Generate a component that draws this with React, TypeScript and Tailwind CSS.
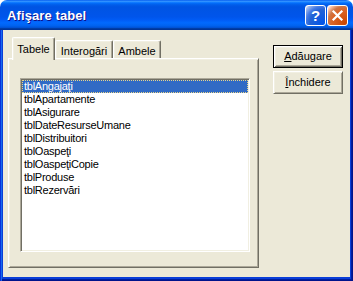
import React from "react";

const items = [
  "tblAngajaţi",
  "tblApartamente",
  "tblAsigurare",
  "tblDateResurseUmane",
  "tblDistribuitori",
  "tblOaspeţi",
  "tblOaspeţiCopie",
  "tblProduse",
  "tblRezervări",
];

export default function App() {
  return (
    <div className="w-[353px] h-[281px] bg-white overflow-hidden font-['Liberation_Sans',Arial,sans-serif] text-[11px] text-black">
      {/* Title bar */}
      <div className="h-[30px] rounded-t-[7px] flex items-center pl-[7px] pr-[5px] bg-[linear-gradient(180deg,#0058ee_0%,#3593ff_4%,#288eff_6%,#127dff_8%,#036ffc_10%,#0262ee_14%,#0057e5_20%,#0054e3_24%,#0055eb_56%,#005bf5_66%,#026afe_76%,#0062ef_86%,#0052d6_92%,#0040ab_94%,#003092_100%)]">
        <span className="text-white font-bold text-[13px] leading-none [text-shadow:1px_1px_#0f1089] tracking-[0.1px]">
          Afişare tabel
        </span>
        <div className="ml-auto flex gap-[1px]">
          <div className="w-[21px] h-[21px] rounded-[3px] border border-white flex items-center justify-center bg-[radial-gradient(circle_at_90%_90%,#0054e9_0%,#2263d5_55%,#4479e4_70%,#a3bbec_90%,#ffffff_100%)]">
            <span className="text-white font-bold text-[15px] leading-none">?</span>
          </div>
          <div className="w-[21px] h-[21px] rounded-[3px] border border-white flex items-center justify-center bg-[radial-gradient(circle_at_90%_90%,#cc4600_0%,#dc6527_55%,#cd7546_70%,#ffccb2_90%,#ffffff_100%)]">
            <svg width="13" height="13" viewBox="0 0 13 13">
              <path d="M2.5 2.5 L10.5 10.5 M10.5 2.5 L2.5 10.5" stroke="white" strokeWidth="2.2" strokeLinecap="square" />
            </svg>
          </div>
        </div>
      </div>

      {/* Frame */}
      <div className="pl-[3px] pr-[3px] pb-[4px] bg-[#0a3ed8] shadow-[inset_1px_0_#0831d9,inset_2px_0_#166aee,inset_-1px_-1px_#00138c,inset_-2px_-2px_#001ea0]">
        <div className="h-[247px] bg-[#ECE9D8] flex pt-[7px] pl-[5px]">
          {/* Left: tabs and panel */}
          <div className="w-[251px] flex flex-col">
            <div className="h-[21px] flex items-end pl-[4px]">
              <div className="relative z-10 w-[43px] h-[23px] -mb-[2px] bg-[#ECE9D8] border-t border-l border-white border-r border-r-[#716F64] rounded-t-[2px] shadow-[inset_-1px_0_#ACA899,inset_1px_1px_#F1EFE2] flex justify-center pt-[5px] leading-[13px]">
                Tabele
              </div>
              <div className="w-[58px] h-[18px] border-t border-l border-white border-r border-r-[#716F64] rounded-t-[2px] shadow-[inset_-1px_0_#ACA899,inset_1px_1px_#F1EFE2] flex justify-center pt-[4px] leading-[13px]">
                Interogări
              </div>
              <div className="w-[48px] h-[18px] border-t border-l border-white border-r border-r-[#716F64] rounded-t-[2px] shadow-[inset_-1px_0_#ACA899,inset_1px_1px_#F1EFE2] flex justify-center pt-[4px] leading-[13px]">
                Ambele
              </div>
            </div>
            <div className="h-[210px] border border-t-white border-l-white border-r-[#716F64] border-b-[#716F64] shadow-[inset_1px_1px_#F1EFE2,inset_-1px_-1px_#ACA899] pl-[11px] pt-[19px]">
              <div className="w-[230px] h-[174px] bg-white border border-t-[#ACA899] border-l-[#ACA899] border-r-white border-b-white shadow-[inset_1px_1px_#716F64,inset_-1px_-1px_#F1EFE2] p-[1px]">
                {items.map((it, i) => (
                  <div
                    key={it}
                    className={
                      i === 0
                        ? "h-[13px] leading-[13px] pl-[2px] tracking-[-0.25px] bg-[#316AC5] text-white outline outline-1 outline-dotted outline-[#e8d48a] -outline-offset-1"
                        : "h-[13px] leading-[13px] pl-[2px] tracking-[-0.25px]"
                    }
                  >
                    {it}
                  </div>
                ))}
              </div>
            </div>
          </div>

          {/* Right: buttons */}
          <div className="ml-[14px] mt-[8px] flex flex-col gap-[3px]">
            <div className="w-[70px] h-[23px] border border-black shadow-[inset_1px_1px_#ffffff,inset_-1px_-1px_#716F64,inset_2px_2px_#F1EFE2,inset_-2px_-2px_#ACA899] flex items-center justify-center leading-[13px]">
              <span>
                <span className="underline underline-offset-[1px]">A</span>dăugare
              </span>
            </div>
            <div className="w-[70px] h-[23px] border border-t-white border-l-white border-r-[#716F64] border-b-[#716F64] shadow-[inset_1px_1px_#F1EFE2,inset_-1px_-1px_#ACA899] flex items-center justify-center leading-[13px]">
              <span>
                <span className="underline underline-offset-[1px]">Î</span>nchidere
              </span>
            </div>
          </div>
        </div>
      </div>
    </div>
  );
}
